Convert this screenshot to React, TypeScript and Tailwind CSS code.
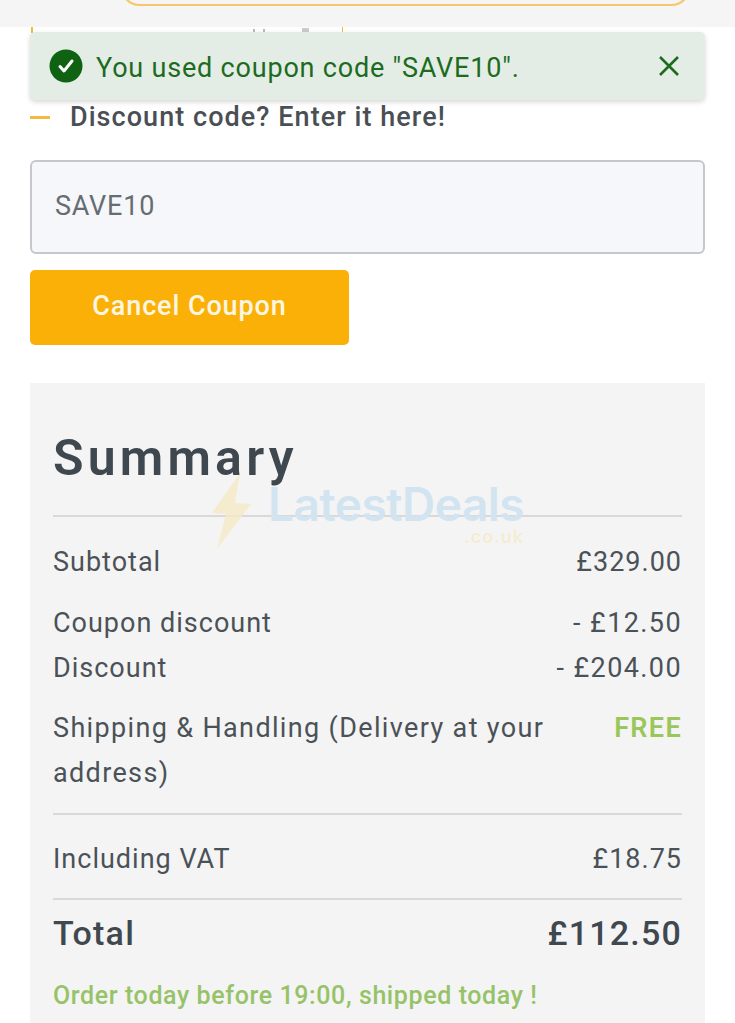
function Row({ label, value, className = '' }: { label: string; value: string; className?: string }) {
  return (
    <div className={`flex justify-between gap-[60px] ${className}`}>
      <span>{label}</span>
      <span className="shrink-0">{value}</span>
    </div>
  );
}

export default function App() {
  return (
    <div className="relative h-[1023px] overflow-hidden bg-white font-['Roboto',sans-serif]">
      {/* top bar */}
      <div className="relative h-[27px] overflow-hidden bg-[#f5f5f5]">
        <div className="absolute left-[120px] top-[-40px] h-[46px] w-[571px] rounded-[20px] border-2 border-[#f6c667] bg-[#f5f5f5]" />
      </div>

      {/* what shows above the alert */}
      <div className="absolute left-[31px] top-[27px] h-[6px] w-[2px] bg-[#f5b942]" />
      <div className="absolute left-[342px] top-[27px] h-[6px] w-[1px] bg-[#f5b942]" />
      <div className="absolute left-[253px] top-[29px] h-[3px] w-[2px] bg-[#b9bcbf]" />
      <div className="absolute left-[263px] top-[29px] h-[3px] w-[2px] bg-[#b9bcbf]" />
      <div className="absolute left-[302px] top-[28px] h-[4px] w-[7px] bg-[#c9cbcd]" />

      {/* alert */}
      <div className="absolute left-[30px] top-[32px] z-10 flex h-[68px] w-[675px] items-center justify-between rounded-[5px] bg-[#e4ede5] pl-[19px] pr-[25px] shadow-[0_2px_5px_rgba(0,0,0,0.16)]">
        <div className="flex items-center gap-[13px]">
          <svg width="34" height="34" viewBox="0 0 34 34" aria-hidden="true">
            <circle cx="17" cy="17" r="16.5" fill="#0f6212" />
            <path d="M11 17.5l4 4.5 8-10" fill="none" stroke="#fff" strokeWidth="3" strokeLinecap="round" strokeLinejoin="round" />
          </svg>
          <span className="pt-[4px] text-[27px] tracking-[0.8px] text-[#1c6b1f]">You used coupon code "SAVE10".</span>
        </div>
        <svg width="22" height="22" viewBox="0 0 22 22" aria-hidden="true">
          <path d="M2 2l18 18M20 2L2 20" stroke="#1c6b1f" strokeWidth="2.6" />
        </svg>
      </div>

      <main className="px-[30px]">
        <div className="mt-[67px] flex h-[46px] items-center">
          <span className="h-[3px] w-[20px] bg-[#f5b942]" />
          <span className="ml-[20px] text-[27px] font-medium tracking-[1.05px] text-[#4a4f55]">Discount code? Enter it here!</span>
        </div>

        <div className="mt-[20px] flex h-[94px] items-center rounded-[6px] border-2 border-[#c4c8ce] bg-[#f5f7fa] pb-[2px] pl-[23px] text-[27px] tracking-[0.8px] text-[#666d72]">
          SAVE10
        </div>

        <button className="mt-[16px] block h-[75px] w-[319px] rounded-[5px] bg-[#fbb007] pb-[2px] text-center text-[27px] font-medium tracking-[0.9px] text-[#fdf6e3]">
          Cancel Coupon
        </button>

        <section className="relative mt-[38px] h-[700px] bg-[#f4f4f5] px-[23px] pt-[40px] text-[27px] leading-[45px] tracking-[1px] text-[#4b5257]">
          <h2 className="h-[92px] text-[50px] leading-[70px] font-semibold tracking-[4.2px] text-[#3f484e]">Summary</h2>

          <div className="border-t-2 border-[#d9d9d9] pt-[23px]">
            <Row label="Subtotal" value="£329.00" />
            <div className="mt-[16px] [&>div>span:last-child]:tracking-[1.4px]">
              <Row label="Coupon discount" value="- £12.50" />
              <Row label="Discount" value="- £204.00" />
            </div>
            <div className="mt-[15px] tracking-[1.35px] [&>div>span:last-child]:font-semibold [&>div>span:last-child]:text-[#9bc75a]">
              <Row label="Shipping & Handling (Delivery at your address)" value="FREE" />
            </div>
          </div>

          <div className="mt-[17px] border-t-2 border-[#d9d9d9] pt-[22px] pb-[16px]">
            <Row label="Including VAT" value="£18.75" />
          </div>

          <div className="border-t-2 border-[#d9d9d9] pt-[11px]">
            <div className="flex h-[45px] items-center justify-between text-[34px] font-medium tracking-[1.2px] text-[#3f484e]">
              <span>Total</span>
              <span>£112.50</span>
            </div>
            <p className="mt-[22px] text-[25px] leading-[36px] font-medium tracking-[0.6px] text-[#97c368]">Order today before 19:00, shipped today !</p>
          </div>

          {/* LatestDeals watermark */}
          <div className="pointer-events-none absolute left-[180px] top-[88px] flex items-start">
            <svg width="42" height="80" viewBox="0 0 42 80" aria-hidden="true">
              <path d="M30 2L2 42l14 1L7 78l34-45-16-1z" fill="#f5e8c6" fillOpacity="0.8" />
            </svg>
            <div className="ml-[16px] mt-[10px] flex flex-col items-end font-['Inter',sans-serif]">
              <span className="text-[46px] leading-[46px] font-semibold tracking-[-0.5px] text-[#d3e4f1]">LatestDeals</span>
              <span className="text-[18px] leading-[20px] font-semibold text-[#f5ecd2]">.co.uk</span>
            </div>
          </div>
        </section>
      </main>
    </div>
  );
}
